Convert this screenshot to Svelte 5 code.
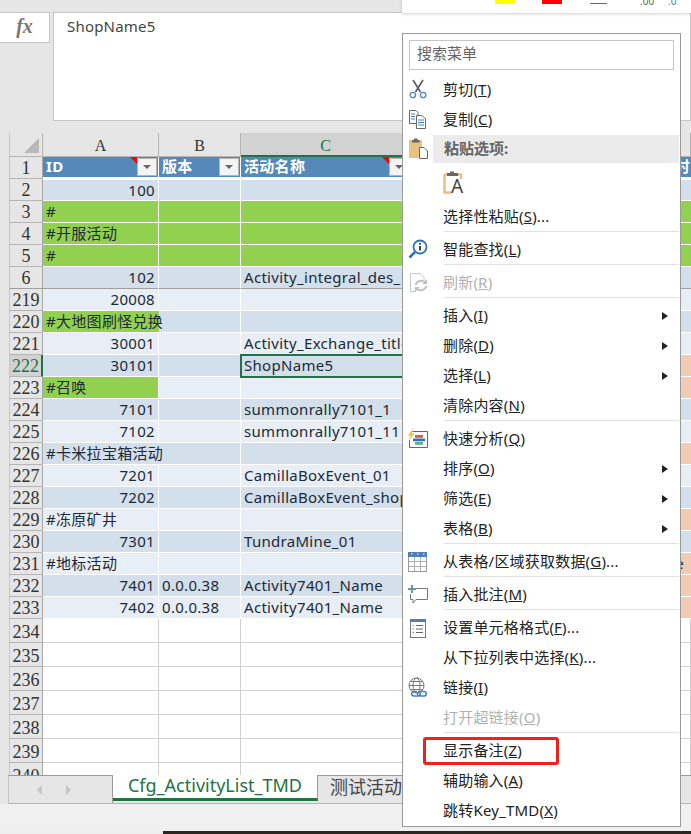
<script>
  const rows = [
    { n: '2', tone: 'd', a: '100', d: 'd' },
    { n: '3', tone: 'g', a: '#', text: true, d: 'g' },
    { n: '4', tone: 'g', a: '#开服活动', text: true, d: 'g' },
    { n: '5', tone: 'g', a: '#', text: true, d: 'g' },
    { n: '6', tone: 'd', a: '102', c: 'Activity_integral_des_1', d: 'd', hidden: true },
    { n: '219', tone: 'e', a: '20008', d: 'e' },
    { n: '220', tone: 'd', a: '#大地图刷怪兑换', text: true, aTone: 'g', spill: true, d: 'd' },
    { n: '221', tone: 'e', a: '30001', c: 'Activity_Exchange_title', d: 'e' },
    { n: '222', tone: 'd', a: '30101', c: 'ShopName5', d: 'p', selected: true },
    { n: '223', tone: 'e', a: '#召唤', text: true, aTone: 'g', d: 'p' },
    { n: '224', tone: 'd', a: '7101', c: 'summonrally7101_1', d: 'd' },
    { n: '225', tone: 'e', a: '7102', c: 'summonrally7101_11', d: 'e' },
    { n: '226', tone: 'd', a: '#卡米拉宝箱活动', text: true, spill: true, d: 'p' },
    { n: '227', tone: 'e', a: '7201', c: 'CamillaBoxEvent_01', d: 'e' },
    { n: '228', tone: 'd', a: '7202', c: 'CamillaBoxEvent_shop', d: 'd' },
    { n: '229', tone: 'e', a: '#冻原矿井', text: true, d: 'p' },
    { n: '230', tone: 'd', a: '7301', c: 'TundraMine_01', d: 'd' },
    { n: '231', tone: 'e', a: '#地标活动', text: true, d: 'p', dText: 'e' },
    { n: '232', tone: 'd', a: '7401', b: '0.0.0.38', c: 'Activity7401_Name', d: 'p' },
    { n: '233', tone: 'e', a: '7402', b: '0.0.0.38', c: 'Activity7401_Name', d: 'p' }
  ];
  const blanks = ['234', '235', '236', '237', '238', '239', '240'];

  const menu = [
    { label: '剪切(', key: 'T', end: ')', icon: 'cut' },
    { label: '复制(', key: 'C', end: ')', icon: 'copy' },
    { header: '粘贴选项:', icon: 'paste' },
    { pasteRow: true },
    { label: '选择性粘贴(', key: 'S', end: ')...' },
    { sep: true },
    { label: '智能查找(', key: 'L', end: ')', icon: 'lookup' },
    { sep: true },
    { label: '刷新(', key: 'R', end: ')', icon: 'refresh', off: true },
    { sep: true },
    { label: '插入(', key: 'I', end: ')', sub: true },
    { label: '删除(', key: 'D', end: ')', sub: true },
    { label: '选择(', key: 'L', end: ')', sub: true },
    { label: '清除内容(', key: 'N', end: ')' },
    { sep: true },
    { label: '快速分析(', key: 'Q', end: ')', icon: 'quick' },
    { label: '排序(', key: 'O', end: ')', sub: true },
    { label: '筛选(', key: 'E', end: ')', sub: true },
    { label: '表格(', key: 'B', end: ')', sub: true },
    { sep: true },
    { label: '从表格/区域获取数据(', key: 'G', end: ')...', icon: 'table' },
    { sep: true },
    { label: '插入批注(', key: 'M', end: ')', icon: 'comment' },
    { sep: true },
    { label: '设置单元格格式(', key: 'F', end: ')...', icon: 'format' },
    { label: '从下拉列表中选择(', key: 'K', end: ')...' },
    { label: '链接(', key: 'I', end: ')', icon: 'link' },
    { label: '打开超链接(', key: 'O', end: ')', off: true },
    { sep: true },
    { label: '显示备注(', key: 'Z', end: ')' },
    { label: '辅助输入(', key: 'A', end: ')' },
    { label: '跳转Key_TMD(', key: 'X', end: ')' }
  ];
</script>

{#snippet icon(name)}
  <svg class="icon" width="22" height="22" viewBox="0 0 22 22" fill="none">
    {#if name === 'cut'}
      <path d="M6 1 L13.500 13 M16 1 L8.500 13" stroke="#5f5f5f" stroke-width="1.700" />
      <circle cx="5.800" cy="16" r="2.700" stroke="#4f86bd" stroke-width="1.300" />
      <circle cx="16.200" cy="16" r="2.700" stroke="#4f86bd" stroke-width="1.300" />
    {:else if name === 'copy'}
      <path d="M9 14.500 H2.500 V1.500 H9 L11 3.500 V6" stroke="#666" />
      <path d="M9.500 6.500 H15 L18.500 10 V19.500 H9.500 Z" fill="#fff" stroke="#666" />
      <path d="M4 5 H8 M4 7.500 H8 M4 10 H8 M11 11 H17 M11 13.500 H17 M11 16 H17" stroke="#3f7fbf" />
    {:else if name === 'paste'}
      <rect x="2" y="2" width="13" height="18" fill="#e8c080" />
      <path d="M5 2 H7 V0.500 H10.500 V2 H12.500 V4.500 H5 Z" fill="#666" />
      <path d="M12.500 9.500 H17 L20.500 13 V20.500 H12.500 Z" fill="#fff" stroke="#666" />
    {:else if name === 'lookup'}
      <circle cx="13" cy="8" r="6.500" stroke="#2f75b5" stroke-width="1.800" fill="#fff" />
      <path d="M8 13 L2.500 18.500" stroke="#2f75b5" stroke-width="2.600" />
      <circle cx="13" cy="4.800" r="1.100" fill="#444" />
      <path d="M13 7 V11.500" stroke="#444" stroke-width="2" />
    {:else if name === 'refresh'}
      <path d="M3.500 19.500 V1.500 H13 L17 5.500 V8 M9 19.500 H3.500" stroke="#c6c6c6" />
      <path d="M8.500 13 A6 6 0 0 1 18 10 M19.500 14 A6 6 0 0 1 10 17" stroke="#c0c0c0" stroke-width="2" />
      <path d="M20 7 V12 H15 Z M8 20 V15 H13 Z" fill="#c0c0c0" />
    {:else if name === 'quick'}
      <path d="M5.500 3.500 H20.500 V19.500 H2.500 V12" stroke="#666" />
      <rect x="8" y="7" width="8" height="2.800" fill="#d8603c" />
      <rect x="6" y="10.500" width="12" height="2.800" fill="#2f75b5" />
      <rect x="8" y="14" width="8" height="2.800" fill="#6aa89a" />
      <path d="M6 0 L1 7.500 H3.500 L2 12.500 L7.500 5.500 H5 Z" fill="#f0c060" />
    {:else if name === 'table'}
      <rect x="1.500" y="2.500" width="18" height="18" fill="#fff" stroke="#9a9a9a" />
      <rect x="1" y="1" width="19" height="5" fill="#4f7fb5" />
      <path d="M7.500 6 V20 M13.500 6 V20 M2 10.500 H19 M2 15.500 H19" stroke="#b0b0b0" />
      <path d="M4 3 H5.500 M10 3 H11.500 M16 3 H17.500" stroke="#fff" />
    {:else if name === 'comment'}
      <path d="M7 4.500 H20.500 V15.500 H9 L6 19 V15.500 H3.500 V10" stroke="#777" />
      <path d="M5 1 V9 M1 5 H9" stroke="#5f9f8c" stroke-width="2" />
    {:else if name === 'format'}
      <rect x="3.500" y="2.500" width="15" height="18" fill="#fff" stroke="#777" />
      <rect x="3" y="2" width="16" height="3" fill="#4f7fb5" />
      <path d="M9 8.500 H16 M9 12 H16 M9 15.500 H16" stroke="#666" />
      <path d="M5.500 8.500 H7 M5.500 12 H7 M5.500 15.500 H7" stroke="#888" />
    {:else if name === 'link'}
      <circle cx="9.500" cy="8.500" r="7.500" stroke="#777" />
      <ellipse cx="9.500" cy="8.500" rx="3.500" ry="7.500" stroke="#777" />
      <path d="M2 8.500 H17 M3 4.500 H16 M3 12.500 H16" stroke="#777" />
      <path d="M10 14.500 H6.500 A2.300 2.300 0 0 0 6.500 19 H11 A2.300 2.300 0 0 0 13 15.500 M13 19 H17.500 A2.300 2.300 0 0 0 17.500 14.500 H13 A2.300 2.300 0 0 0 11 18" stroke="#3f7fbf" stroke-width="1.600" fill="none" />
    {/if}
  </svg>
{/snippet}

<div class="page">
  <div class="formula-bar">
    <div class="fx">fx</div>
    <div class="formula-input">ShopName5</div>
  </div>

  <div class="sheet">
    <div class="row col-heads">
      <div class="corner"><span class="corner-mark"></span></div>
      <div class="col-head">A</div>
      <div class="col-head">B</div>
      <div class="col-head active">C</div>
      <div class="col-head"></div>
    </div>

    <div class="row">
      <div class="row-head">1</div>
      <div class="cell title">
        ID<span class="note"></span><span class="filter"></span>
      </div>
      <div class="cell title">版本<span class="filter"></span></div>
      <div class="cell title">
        活动名称<span class="note"></span><span class="filter"></span>
      </div>
      <div class="cell title last-title">时</div>
    </div>

    {#each rows as r}
      <div class="row" class:cut={r.hidden} class:second={r.n === '2'}>
        <div class="row-head" class:picked={r.selected}>{r.n}</div>
        <div
          class="cell tone-{r.aTone || r.tone}"
          class:num={!r.text}
          class:spill={r.spill}
        >{r.a}</div>
        <div class="cell tone-{r.tone}">{r.b || ''}</div>
        <div class="cell tone-{r.tone}" class:selected={r.selected}>{r.c || ''}</div>
        <div class="cell tone-{r.d} end">{r.dText || ''}</div>
      </div>
    {/each}

    {#each blanks as n}
      <div class="row blank">
        <div class="row-head">{n}</div>
        <div class="cell"></div>
        <div class="cell"></div>
        <div class="cell"></div>
        <div class="cell"></div>
      </div>
    {/each}
  </div>

  <div class="tabs">
    <div class="tab-nav">
      <svg width="34" height="10" viewBox="0 0 34 10">
        <path d="M5 0 V10 L0 5 Z M29 0 V10 L34 5 Z" fill="#c6c6c6" />
      </svg>
    </div>
    <div class="tab active">Cfg_ActivityList_TMD</div>
    <div class="tab">测试活动数据表</div>
  </div>
  <div class="status"></div>
  <div class="taskbar"></div>

  <div class="mini-toolbar">
    <span class="swatch yellow"></span>
    <span class="swatch red"></span>
    <span class="rule"></span>
    <span class="tiny">.00</span>
    <span class="tiny blue">.0</span>
  </div>

  <div class="menu">
    <div class="search">搜索菜单</div>
    {#each menu as item}
      {#if item.sep}
        <div class="sep"></div>
      {:else if item.header}
        <div class="item header-row">
          <span class="slot">{@render icon(item.icon)}</span>
          <span class="header">{item.header}</span>
        </div>
      {:else if item.pasteRow}
        <div class="paste-row">
          <svg width="22" height="23" viewBox="0 0 22 23" fill="none">
            <path d="M1.500 3.500 H5 M13 3.500 H18 V8 M1.500 3 V21.500 H8" stroke="#e8c080" stroke-width="2.500" />
            <path d="M4 5 V2 H7 V0.500 H11 V2 H15 V5 Z" fill="#666" />
            <text x="8" y="22" class="paste-a">A</text>
          </svg>
        </div>
      {:else}
        <div class="item" class:off={item.off}>
          <span class="slot">
            {#if item.icon}{@render icon(item.icon)}{/if}
          </span>
          <span class="label">{item.label}<u>{item.key}</u>{item.end}</span>
          {#if item.sub}<span class="arrow"></span>{/if}
        </div>
      {/if}
    {/each}
    <div class="red-box"></div>
  </div>
</div>

<style>
  :global(body) {
    margin: 0;
    background: #e6e6e6;
  }

  .page {
    position: relative;
    width: 691px;
    height: 834px;
    overflow: hidden;
    font-family: "Noto Sans", "Noto Sans CJK SC", sans-serif;
    font-size: 15px;
    color: #222;
  }

  .formula-bar {
    display: flex;
    align-items: flex-start;
    gap: 3px;
    height: 121px;
    padding-top: 12px;
  }

  .fx {
    width: 49px;
    height: 29px;
    background: #fff;
    border: 1px solid #c6c6c6;
    border-left: none;
    text-align: center;
    font-family: "Liberation Serif", serif;
    font-style: italic;
    font-weight: bold;
    font-size: 20px;
    line-height: 27px;
    color: #777;
  }

  .formula-input {
    flex: 1;
    height: 107px;
    background: #fff;
    border: 1px solid #c6c6c6;
    padding-left: 13px;
    line-height: 27px;
    font-size: 15px;
    letter-spacing: 0.2px;
    color: #444;
  }

  .sheet {
    height: 642px;
    overflow: hidden;
    padding-left: 9px;
  }

  .row {
    display: grid;
    grid-template-columns: 34px 116px 82px 170px 280px;
    grid-template-rows: minmax(0, 1fr);
    height: 22px;
  }

  .col-heads {
    height: 24px;
  }

  .corner {
    position: relative;
    background: #e6e6e6;
    border-left: 1px solid #c6c6c6;
    border-right: 1px solid #b5b5b5;
    border-bottom: 1px solid #b5b5b5;
    box-sizing: border-box;
  }

  .corner-mark {
    position: absolute;
    right: 3px;
    bottom: 3px;
    border-style: solid;
    border-width: 0 0 15px 15px;
    border-color: transparent transparent #b9b9b9 transparent;
  }

  .col-head {
    box-sizing: border-box;
    background: #e6e6e6;
    border-right: 1px solid #b5b5b5;
    border-bottom: 1px solid #b5b5b5;
    text-align: center;
    font-family: "Liberation Serif", serif;
    font-size: 16px;
    line-height: 25px;
    color: #333;
  }

  .col-head.active {
    background: #d2d2d2;
    color: #217346;
    border-bottom: 2px solid #217346;
  }

  .row-head {
    box-sizing: border-box;
    background: #e6e6e6;
    border-left: 1px solid #c6c6c6;
    border-right: 1px solid #a8a8a8;
    border-bottom: 1px solid #b5b5b5;
    text-align: center;
    font-family: "Liberation Serif", serif;
    font-size: 18px;
    line-height: 23px;
    color: #333;
  }

  .row-head.picked {
    background: #d2d2d2;
    color: #217346;
    border-right: 2px solid #217346;
  }

  .cell {
    position: relative;
    box-sizing: border-box;
    padding-left: 3px;
    border-right: 1px solid #fff;
    border-bottom: 1px solid #fff;
    line-height: 21px;
    letter-spacing: 0.3px;
    white-space: nowrap;
    color: #1c2a38;
  }

  .cell.num {
    text-align: right;
    padding-right: 3px;
  }

  .cell.spill {
    z-index: 1;
    border-right: none;
  }

  .cell.end {
    border-right: none;
    text-align: right;
    padding-right: 7px;
  }

  .tone-d { background: #d3dfeb; }
  .tone-e { background: #e8eef5; }
  .tone-g { background: #92d050; }
  .tone-p { background: #f1cbb2; }

  .title {
    background: #5589b9;
    color: #fff;
    font-weight: bold;
    line-height: 19px;
    border-bottom: 2px solid #fff;
  }

  .last-title {
    border-right: none;
    text-align: right;
    padding-right: 1px;
  }

  .second .cell {
    border-top: 1px solid #fff;
    line-height: 20px;
  }

  .cut .cell,
  .cut .row-head {
    border-bottom: 1px solid #a0a0a0;
  }

  .selected {
    outline: 2px solid #217346;
    outline-offset: -1px;
    z-index: 1;
  }

  .note {
    position: absolute;
    right: 21px;
    top: 0;
    border-style: solid;
    border-width: 0 7px 7px 0;
    border-color: transparent #f00 transparent transparent;
  }

  .filter {
    position: absolute;
    right: 1px;
    top: 1px;
    width: 20px;
    height: 18px;
    background: #f4f4f4;
    border: 1px solid #b5b5b5;
    box-sizing: border-box;
  }

  .filter::after {
    content: "";
    position: absolute;
    left: 5px;
    top: 6px;
    border-style: solid;
    border-width: 4px 4px 0 4px;
    border-color: #666 transparent transparent transparent;
  }

  .blank {
    height: 24px;
  }

  .blank .row-head {
    line-height: 27px;
  }

  .blank .cell {
    background: #fff;
    border-right: 1px solid #d0d0d0;
    border-bottom: 1px solid #d0d0d0;
  }

  .tabs {
    display: flex;
    height: 29px;
    margin-left: 8px;
    box-sizing: border-box;
    border-left: 1px solid #c6c6c6;
    border-top: 1px solid #999;
    border-bottom: 1px solid #b5b5b5;
  }

  .tab-nav {
    width: 104px;
    padding: 9px 0 0 28px;
    box-sizing: border-box;
    border-right: 1px solid #999;
  }

  .tab-nav svg {
    display: block;
  }

  .tab {
    padding: 0 12px;
    font-size: 18px;
    line-height: 22px;
    color: #444;
    white-space: nowrap;
  }

  .tab.active {
    width: 205px;
    box-sizing: border-box;
    text-align: center;
    background: #fff;
    color: #217346;
    border-right: 1px solid #999;
    border-bottom: 3px solid #217346;
    height: 26px;
    margin-top: -1px;
    line-height: 21px;
  }

  .status {
    height: 27px;
    background: #f0f0f0;
  }

  .taskbar {
    height: 3px;
    background: linear-gradient(to right, #ededed 163px, #2d2620 163px);
  }

  .mini-toolbar {
    position: absolute;
    z-index: 2;
    left: 402px;
    top: 0;
    width: 289px;
    height: 13px;
    overflow: hidden;
    background: #fff;
    box-shadow: 0 1px 3px rgba(0, 0, 0, 0.2);
  }

  .swatch {
    position: absolute;
    top: 0;
    width: 20px;
    height: 4px;
  }

  .yellow { left: 93px; background: #ff0; }
  .red { left: 140px; background: #f00; }

  .rule {
    position: absolute;
    left: 188px;
    top: 3px;
    width: 17px;
    height: 1px;
    background: #666;
  }

  .tiny {
    position: absolute;
    left: 238px;
    top: -5px;
    font-size: 10px;
    line-height: 12px;
    color: #666;
  }

  .tiny.blue {
    left: 266px;
    color: #3f7fbf;
  }

  .menu {
    position: absolute;
    z-index: 2;
    left: 402px;
    top: 33px;
    width: 279px;
    height: 794px;
    box-sizing: border-box;
    background: #fff;
    border: 1px solid #999;
  }

  .search {
    width: 265px;
    height: 30px;
    margin: 6px 0 5px 6px;
    box-sizing: border-box;
    border: 1px solid #c6c6c6;
    padding-left: 7px;
    line-height: 25px;
    color: #666;
  }

  .item {
    display: flex;
    align-items: center;
    height: 30px;
  }

  .slot {
    display: block;
    width: 40px;
    height: 22px;
    flex: none;
  }

  .icon {
    display: block;
    margin-left: 4px;
  }

  .label {
    margin-bottom: 4px;
    letter-spacing: 0.2px;
    color: #222;
  }

  .off .label {
    color: #b1b1b1;
  }

  .header-row {
    height: 28px;
  }

  .header {
    align-self: stretch;
    flex: 1;
    margin-left: -10px;
    margin-right: 1px;
    padding-left: 11px;
    background: #ebebeb;
    line-height: 27px;
    font-weight: bold;
    color: #666;
  }

  .paste-row {
    height: 39px;
    padding: 8px 0 0 40px;
    box-sizing: border-box;
  }

  .paste-a {
    font-family: "Noto Sans", sans-serif;
    font-size: 19px;
    fill: #444;
  }

  .arrow {
    margin-left: auto;
    margin-right: 12px;
    border-style: solid;
    border-width: 4.500px 0 4.500px 6px;
    border-color: transparent transparent transparent #222;
  }

  .sep {
    height: 3px;
    margin: -1px 1px 1px 41px;
    box-sizing: border-box;
    border-top: 1px solid #e1e1e1;
  }

  .red-box {
    position: absolute;
    left: 20px;
    top: 703px;
    width: 136px;
    height: 28px;
    box-sizing: border-box;
    border: 3px solid #f0201a;
    border-radius: 3px;
  }
</style>
